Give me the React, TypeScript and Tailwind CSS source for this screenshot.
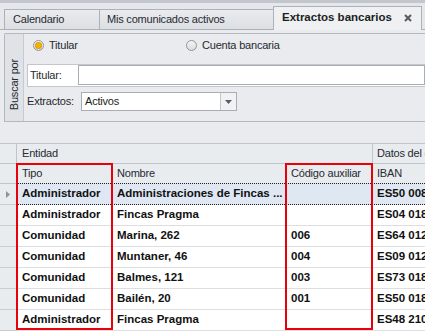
import React from "react";

const rows = [
  { tipo: "Administrador", nombre: "Administraciones de Fincas ...", codigo: "", iban: "ES50 0081" },
  { tipo: "Administrador", nombre: "Fincas Pragma", codigo: "", iban: "ES04 0182" },
  { tipo: "Comunidad", nombre: "Marina, 262", codigo: "006", iban: "ES64 0128" },
  { tipo: "Comunidad", nombre: "Muntaner, 46", codigo: "004", iban: "ES09 0128" },
  { tipo: "Comunidad", nombre: "Balmes, 121", codigo: "003", iban: "ES73 0182" },
  { tipo: "Comunidad", nombre: "Bailén, 20", codigo: "001", iban: "ES50 0182" },
  { tipo: "Administrador", nombre: "Fincas Pragma", codigo: "", iban: "ES48 2100" },
];

function Radio({ checked, label }: { checked?: boolean; label: string }) {
  return (
    <div className="flex items-center gap-[5px]">
      <span className="w-[11px] h-[11px] rounded-full border border-[#8f959c] bg-gradient-to-b from-[#f4f5f6] to-[#d9dcdf] flex items-center justify-center">
        {checked && <span className="w-[5px] h-[5px] rounded-full bg-[#f2b400] shadow-[0_0_0_1px_#e49a00]" />}
      </span>
      <span>{label}</span>
    </div>
  );
}

export default function App() {
  return (
    <div
      className="relative w-[425px] h-[331px] overflow-hidden bg-[#e9ebee] text-[11px] tracking-[-0.2px] text-[#262a30] flex flex-col"
      style={{ fontFamily: '"Liberation Sans", Arial, sans-serif' }}
    >
      {/* top band */}
      <div className="h-[3px] bg-[#c3c7cd] shrink-0" />

      {/* Tabs */}
      <div className="h-[27px] shrink-0 flex items-end pl-[4px] border-b border-[#adb2b9] bg-[#e4e7eb]">
        <div className="w-[95px] shrink-0 h-[20px] border-l border-t border-[#adb2b9] bg-gradient-to-b from-[#e9ebee] to-[#dcdfe3] flex items-center pl-[8px]">
          Calendario
        </div>
        <div className="w-[174px] shrink-0 h-[20px] border-l border-t border-[#adb2b9] bg-gradient-to-b from-[#e9ebee] to-[#dcdfe3] flex items-center pl-[7px]">
          Mis comunicados activos
        </div>
        <div className="w-[149px] shrink-0 h-[24px] -mb-px border-l border-t border-r border-[#adb2b9] bg-[#eef0f2] flex items-center pl-[8px] pb-[2px]">
          <span className="font-bold text-[11.5px] tracking-normal text-[#1b1e22]">Extractos bancarios</span>
          <svg className="ml-auto mr-[9px]" width="8" height="8" viewBox="0 0 8 8">
            <path d="M1 1 L7 7 M7 1 L1 7" stroke="#555a60" strokeWidth="2" />
          </svg>
        </div>
      </div>

      {/* Search group */}
      <div className="ml-[4px] mt-[3px] h-[89px] shrink-0 flex border-l border-t border-b border-[#b3b8be] rounded-tl-[2px]">
        <div className="w-[19px] shrink-0 border-r border-[#c7cbd0] bg-[#dfe2e6] flex items-center justify-center pt-[14px]">
          <span className="[writing-mode:vertical-rl] rotate-180">Buscar por</span>
        </div>
        <div className="flex-1 flex flex-col">
          <div className="h-[22px] flex items-center pl-[9px] pt-[1px]">
            <div className="w-[153px]">
              <Radio checked label="Titular" />
            </div>
            <Radio label="Cuenta bancaria" />
          </div>
          <div className="mt-[8px] ml-[3px] h-[23px] flex items-start bg-white border-l border-t border-b border-[#c3c7cc]">
            <span className="w-[50px] pl-[2px] h-[21px] flex items-center">Titular:</span>
            <div className="flex-1 h-[20px] border border-[#a9aeb5] bg-white" />
          </div>
          <div className="mt-[5px] ml-[3px] h-[19px] flex items-center">
            <span className="w-[54px]">Extractos:</span>
            <div className="w-[156px] h-[19px] flex border border-[#a9aeb5] bg-white">
              <span className="flex-1 pl-[3px] flex items-center text-[#1b1e22]">Activos</span>
              <span className="w-[16px] border-l border-[#c3c7cc] bg-[#f1f2f4] flex items-center justify-center">
                <svg width="7" height="4" viewBox="0 0 7 4">
                  <path d="M0 0 H7 L3.5 4 Z" fill="#5b6067" />
                </svg>
              </span>
            </div>
          </div>
        </div>
      </div>

      {/* Grid */}
      <div className="mt-[21px] flex flex-col bg-white">
        {/* band header */}
        <div className="h-[21px] flex border-t border-b border-[#c1c5cb] bg-[#e9ecef]">
          <div className="w-[17px] shrink-0 border-r border-[#c1c5cb]" />
          <div className="w-[356px] shrink-0 border-r border-[#c1c5cb] pl-[5px] flex items-center">Entidad</div>
          <div className="flex-1 min-w-0 pl-[4px] flex items-center whitespace-nowrap overflow-hidden">Datos del e</div>
        </div>
        {/* column header */}
        <div className="h-[20px] flex border-b border-[#c1c5cb] bg-[#e9ecef]">
          <div className="w-[17px] shrink-0 border-r border-[#c1c5cb]" />
          <div className="w-[96px] shrink-0 border-r border-[#c1c5cb] pl-[5px] flex items-center">Tipo</div>
          <div className="w-[174px] shrink-0 border-r border-[#c1c5cb] pl-[4px] flex items-center">Nombre</div>
          <div className="w-[86px] shrink-0 border-r border-[#c1c5cb] pl-[4px] flex items-center whitespace-nowrap">Código auxiliar</div>
          <div className="flex-1 min-w-0 pl-[4px] flex items-center">IBAN</div>
        </div>
        {/* data rows */}
        {rows.map((r, i) => (
          <div key={i} className="h-[21px] flex border-b border-[#dcdee1] font-bold text-[11.5px] tracking-normal text-[#111]">
            <div className="w-[17px] shrink-0 -mb-px border-b border-r border-[#c9cdd2] bg-[#e9ecef] flex items-center justify-center">
              {i === 0 && (
                <svg width="4" height="7" viewBox="0 0 4 7">
                  <path d="M0 0 L4 3.5 L0 7 Z" fill="#8d939b" />
                </svg>
              )}
            </div>
            <div
              className={
                i === 0
                  ? "flex-1 min-w-0 flex bg-[#dfe7f2] border-t border-b border-dotted border-[#222] -mt-px -mb-px"
                  : "flex-1 min-w-0 flex"
              }
            >
              <div className="w-[96px] shrink-0 border-r border-[#dcdee1] pl-[5px] flex items-center">{r.tipo}</div>
              <div className="w-[174px] shrink-0 border-r border-[#dcdee1] pl-[4px] flex items-center whitespace-nowrap overflow-hidden">
                {r.nombre}
              </div>
              <div className="w-[86px] shrink-0 border-r border-[#dcdee1] pl-[4px] flex items-center">{r.codigo}</div>
              <div className="flex-1 min-w-0 pl-[4px] flex items-center whitespace-nowrap overflow-hidden">{r.iban}</div>
            </div>
          </div>
        ))}
      </div>

      {/* red highlight frames */}
      <div className="absolute left-[16px] top-[163px] w-[97px] h-[167px] border-2 border-[#e8000b]" />
      <div className="absolute left-[285px] top-[163px] w-[88px] h-[167px] border-2 border-[#e8000b]" />
    </div>
  );
}
